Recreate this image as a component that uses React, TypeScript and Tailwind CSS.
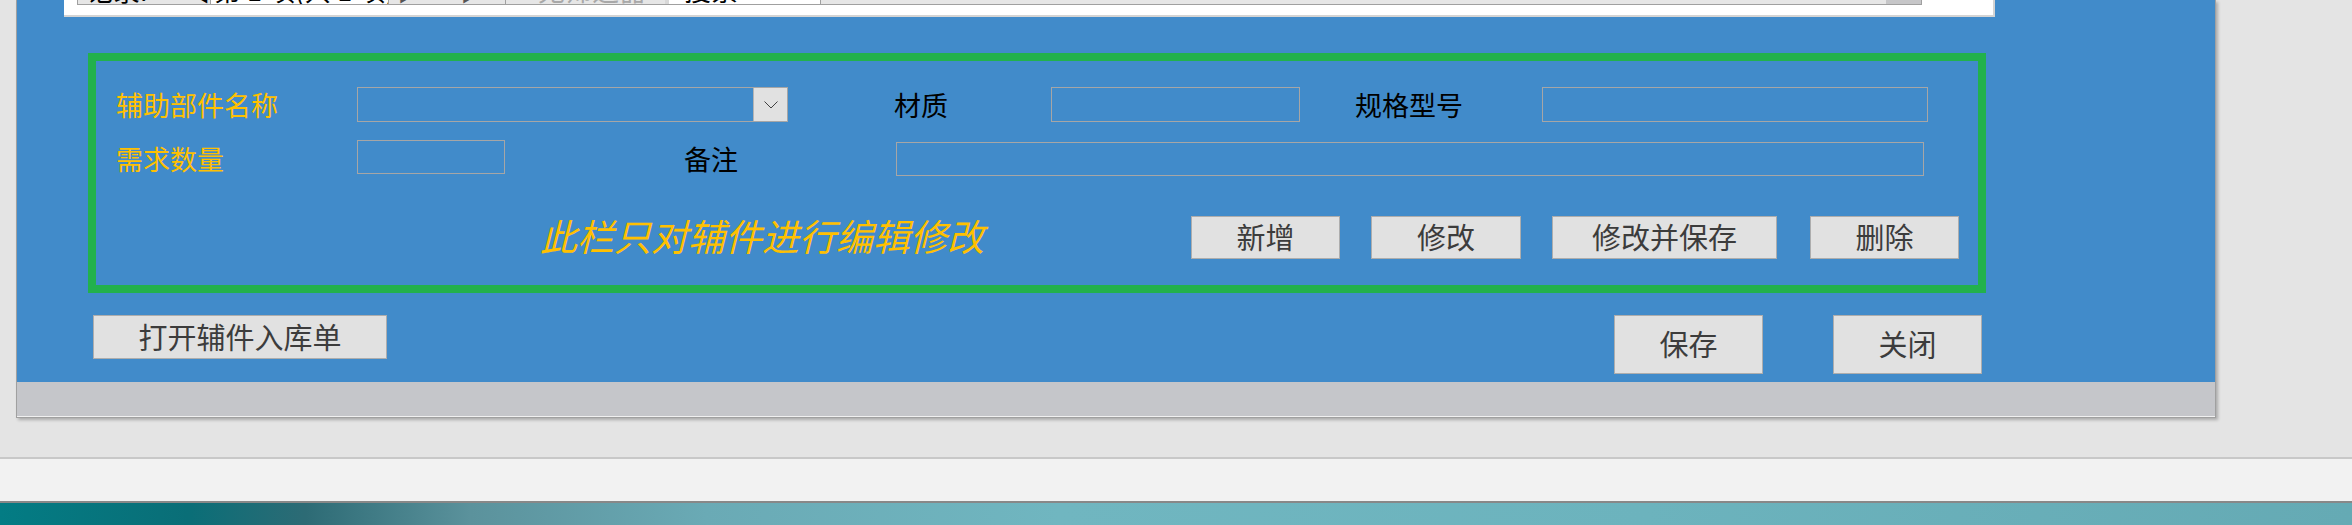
import React from "react";

const CJK = "font-['Noto_Sans_CJK_SC','Noto_Sans',sans-serif]";

function Btn({ label, className }: { label: string; className: string }) {
  return (
    <div
      className={`flex items-center justify-center bg-[#e1e1e1] border border-[#adadad] text-[#3c3c3c] text-[29px] leading-none ${className}`}
    >
      <span className="mt-[-2px]">{label}</span>
    </div>
  );
}

function Box({ className }: { className: string }) {
  return <div className={`border border-[#a6a6a6] ${className}`} />;
}

function NavCell({
  text,
  className,
  textClass,
}: {
  text?: string;
  className: string;
  textClass?: string;
}) {
  return (
    <div className={`h-full flex items-end overflow-hidden whitespace-nowrap ${className}`}>
      {text ? (
        <span className={`block leading-none text-[27px] mb-[1px] ${textClass ?? "text-black"}`}>{text}</span>
      ) : null}
    </div>
  );
}

export default function App() {
  return (
    <div className={`w-[2352px] h-[525px] bg-[#e4e4e4] flex flex-col overflow-hidden ${CJK}`}>
      {/* top area with window */}
      <div className="h-[457px] flex items-start">
        <div className="ml-[16px] w-[2200px] border-l border-r border-b border-[#a0a0a0] shadow-[2px_2px_3px_rgba(0,0,0,0.25)] flex flex-col">
          {/* blue client area */}
          <div className="h-[382px] bg-[#418bca] flex flex-col">
            {/* white subform remnant (navigation bar cut off at the top) */}
            <div className="ml-[47px] w-[1931px] h-[17px] bg-white border-r-2 border-b-2 border-[#d4d4d4]">
              <div className="ml-[13px] w-[1845px] h-[5px] flex bg-[#e6e6e6] border-x border-b border-[#a0a0a0]">
                <NavCell text="记录: ⏮ ◀" className="w-[133px] pl-[8px] border-r border-[#a0a0a0]" />
                <NavCell text="第 1 项(共 1 项)" className="w-[178px] pl-[3px] bg-white border-r border-[#a0a0a0]" />
                <NavCell text="▶ ⏭ ▶*" className="w-[117px] pl-[8px] border-r border-[#a0a0a0]" textClass="text-[#555]" />
                <NavCell text="无筛选器" className="w-[163px] pl-[32px] border-r-4 border-[#d8d8d8]" textClass="text-[#a8a8a8]" />
                <NavCell text="搜索" className="w-[152px] pl-[15px] bg-white border-r border-[#a0a0a0]" />
                <div className="flex-1" />
                <div className="w-[35px] h-full bg-[#c6c6c8]" />
              </div>
            </div>

            {/* green edit frame */}
            <div className="ml-[71px] mt-[36px] w-[1898px] h-[240px] border-[8px] border-[#22b14c] flex flex-col">
              {/* row 1 */}
              <div className="mt-[26px] h-[35px] pl-[20px] flex items-center">
                <div className="w-[241px] text-[27px] leading-none text-[#ffc000]">辅助部件名称</div>
                <div className="w-[431px] h-[35px] border border-[#a6a6a6] flex justify-end">
                  <div className="w-[34px] h-full bg-[#e1e1e1] border-l border-[#b4b4b4] flex items-center justify-center">
                    <svg width="14" height="8" viewBox="0 0 14 8">
                      <polyline points="0.5,0.5 7,7 13.5,0.5" fill="none" stroke="#404040" strokeWidth="1" />
                    </svg>
                  </div>
                </div>
                <div className="ml-[106px] w-[157px] text-[27px] leading-none text-black">材质</div>
                <Box className="w-[249px] h-[35px]" />
                <div className="ml-[55px] w-[187px] text-[27px] leading-none text-black">规格型号</div>
                <Box className="w-[386px] h-[35px]" />
              </div>

              {/* row 2 */}
              <div className="mt-[18px] h-[36px] pl-[20px] flex items-center">
                <div className="w-[241px] text-[27px] leading-none text-[#ffc000]">需求数量</div>
                <Box className="w-[148px] h-[34px] self-start" />
                <div className="ml-[179px] w-[212px] text-[27px] leading-none text-black">备注</div>
                <Box className="w-[1028px] h-[34px] self-end" />
              </div>

              {/* row 3 */}
              <div className="mt-[40px] h-[43px] flex items-center">
                <div className="ml-[444px] w-[651px] text-[37px] leading-none italic text-[#ffc000] mt-[-4px]">
                  此栏只对辅件进行编辑修改
                </div>
                <Btn label="新增" className="w-[149px] h-[43px]" />
                <Btn label="修改" className="ml-[31px] w-[150px] h-[43px]" />
                <Btn label="修改并保存" className="ml-[31px] w-[225px] h-[43px]" />
                <Btn label="删除" className="ml-[33px] w-[149px] h-[43px]" />
              </div>
            </div>

            {/* bottom buttons */}
            <div className="mt-[22px] pl-[76px] flex items-start">
              <Btn label="打开辅件入库单" className="w-[294px] h-[44px]" />
              <Btn label="保存" className="ml-[1227px] w-[149px] h-[59px]" />
              <Btn label="关闭" className="ml-[70px] w-[149px] h-[59px]" />
            </div>
          </div>
          {/* gray footer strip */}
          <div className="h-[34px] bg-[#c5c6ca]" />
          <div className="h-[1px] bg-[#f0f0f0]" />
        </div>
      </div>
      <div className="h-[2px] bg-[#c8c8c8]" />
      <div className="h-[42px] bg-[#f2f2f2]" />
      <div className="h-[2px] bg-[#888888]" />
      <div className="flex-1 bg-[linear-gradient(90deg,#037c84_0%,#0a6e77_8%,#2d6b75_13%,#5b929c_20%,#6aaab5_30%,#70b6c0_45%,#6cb3bd_70%,#65aab4_100%)]" />
    </div>
  );
}
